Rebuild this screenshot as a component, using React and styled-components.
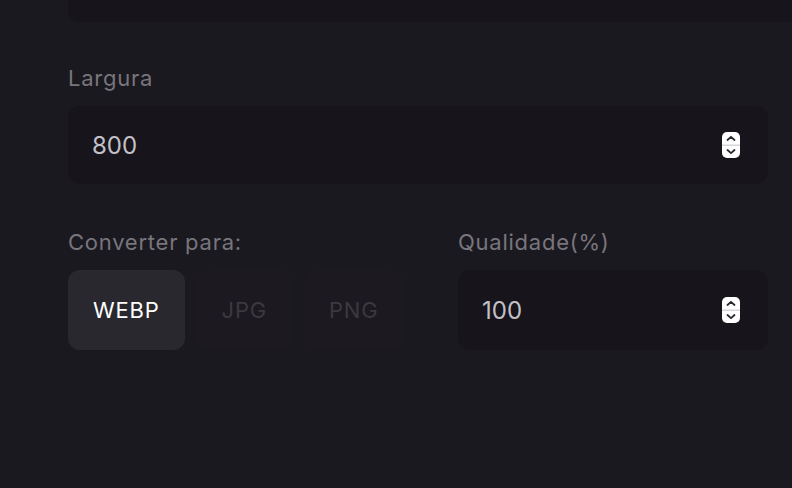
import React from "react";
import styled, { createGlobalStyle } from "styled-components";

const Global = createGlobalStyle`
  html, body { margin: 0; padding: 0; background: #1b1920; overflow: hidden; }
  body { font-family: Inter, "Noto Sans", sans-serif; }
`;

const Page = styled.div`
  width: 792px;
  height: 488px;
  box-sizing: border-box;
  padding: 0 24px 0 68px;
  display: flex;
  flex-direction: column;
`;

const TopPanel = styled.div`
  height: 22px;
  margin-right: -60px;
  background: #17151b;
  border-radius: 0 0 12px 12px;
`;

const Field = styled.div`
  display: flex;
  flex-direction: column;
  gap: 16px;
  margin-top: ${(p) => p.$top || 0}px;
`;

const Label = styled.div`
  font-size: 22px;
  line-height: 24px;
  color: #78757d;
  letter-spacing: 0.75px;
`;

const InputBox = styled.div`
  height: ${(p) => p.$h}px;
  box-sizing: border-box;
  background: #17151b;
  border-radius: 12px;
  display: flex;
  align-items: center;
  justify-content: space-between;
  padding: 0 28px 0 24px;
`;

const Value = styled.span`
  font-size: 24px;
  color: #c3c1c7;
`;

const Row = styled.div`
  display: grid;
  grid-template-columns: 310px 310px;
  column-gap: 80px;
  margin-top: 46px;
`;

const Buttons = styled.div`
  display: flex;
  gap: 12px;
`;

const FormatButton = styled.div`
  height: 80px;
  padding: 0 25px;
  display: flex;
  align-items: center;
  border-radius: 12px;
  font-size: 22px;
  letter-spacing: 0.8px;
  background: ${(p) => (p.$active ? "#2a282f" : "#1c1a20")};
  color: ${(p) => (p.$active ? "#ffffff" : "#3b393f")};
`;

const Spinner = () => (
  <svg width="18" height="26" viewBox="0 0 18 26">
    <rect x="0" y="0" width="18" height="26" rx="5" fill="#ffffff" />
    <rect x="0" y="12.5" width="18" height="1.5" fill="#d6d5d8" />
    <path d="M5.5 8 L9 4.8 L12.5 8" fill="none" stroke="#2a282e" strokeWidth="1.8" strokeLinecap="round" strokeLinejoin="round" />
    <path d="M5.5 18 L9 21.2 L12.5 18" fill="none" stroke="#2a282e" strokeWidth="1.8" strokeLinecap="round" strokeLinejoin="round" />
  </svg>
);

export default function App() {
  return (
    <>
      <Global />
      <Page>
        <TopPanel />
        <Field $top={44}>
          <Label>Largura</Label>
          <InputBox $h={78}>
            <Value>800</Value>
            <Spinner />
          </InputBox>
        </Field>
        <Row>
          <Field>
            <Label>Converter para:</Label>
            <Buttons>
              <FormatButton $active>WEBP</FormatButton>
              <FormatButton>JPG</FormatButton>
              <FormatButton>PNG</FormatButton>
            </Buttons>
          </Field>
          <Field>
            <Label>Qualidade(%)</Label>
            <InputBox $h={80}>
              <Value>100</Value>
              <Spinner />
            </InputBox>
          </Field>
        </Row>
      </Page>
    </>
  );
}
